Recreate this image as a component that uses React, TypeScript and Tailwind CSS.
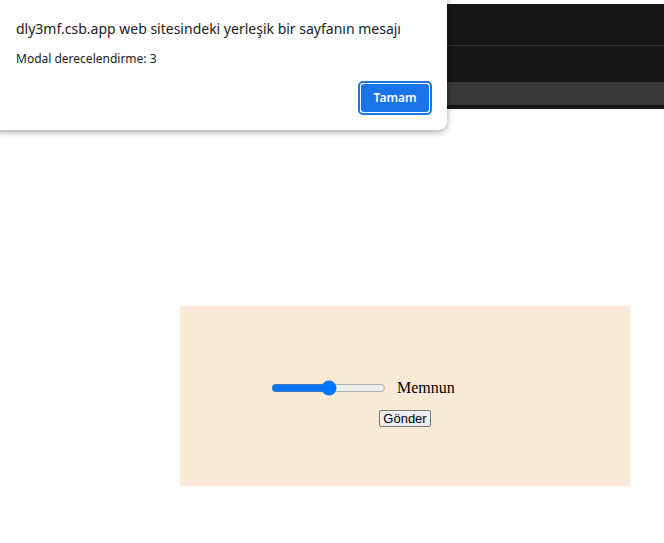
import React from "react";

export default function App() {
  return (
    <div className="relative w-[664px] h-[543px] bg-white overflow-hidden">
      {/* dark strip (behind the dialog) */}
      <div className="absolute left-0 top-[4px] w-full">
        <div className="h-[42px] bg-[#171717] border-b border-[#2e2e2e]"></div>
        <div className="h-[36px] bg-[#171717]"></div>
        <div className="h-[23px] bg-[#383838]"></div>
        <div className="h-[4px] bg-[#171717]"></div>
      </div>

      {/* page content */}
      <div className="pt-[306px] pl-[180px]">
        <div className="w-[450px] h-[180px] bg-[#faebd7] flex flex-col pt-[70px]">
          <div className="flex items-center pl-[91px] gap-[11px]">
            <input
              type="range"
              min={1}
              max={5}
              defaultValue={3}
              className="w-[115px] accent-[#0075ff]"
            />
            <span className="text-[16px] text-black" style={{ fontFamily: '"Liberation Serif", serif' }}>
              Memnun
            </span>
          </div>
          <div className="flex justify-center mt-[10px]">
            <button
              className="px-[3px] h-[17px] leading-[13px] text-[13px] text-black bg-[#efefef] border border-[#767676] rounded-[2px]"
              style={{ fontFamily: '"Liberation Sans", Arial, sans-serif' }}
            >
              Gönder
            </button>
          </div>
        </div>
      </div>

      {/* alert dialog */}
      <div
        className="absolute left-[-10px] top-[-8px] w-[457px] h-[138px] bg-white rounded-[8px] shadow-[0_2px_6px_rgba(0,0,0,0.35)] pl-[26px] pt-[27px]"
        style={{ fontFamily: '"Noto Sans", "Open Sans", sans-serif' }}
      >
        <div className="text-[14px] text-[#202124] leading-[20px]">
          dly3mf.csb.app web sitesindeki yerleşik bir sayfanın mesajı
        </div>
        <div className="mt-[12px] text-[12px] text-[#202124] leading-[16px]">
          Modal derecelendirme: 3
        </div>
        <div className="absolute right-[15px] bottom-[15px] rounded-[5px] border-2 border-[#1a73e8] p-[1px]">
          <div className="w-[68px] h-[28px] bg-[#1a73e8] rounded-[3px] flex items-center justify-center text-white text-[12px] font-semibold">
            Tamam
          </div>
        </div>
      </div>
    </div>
  );
}
